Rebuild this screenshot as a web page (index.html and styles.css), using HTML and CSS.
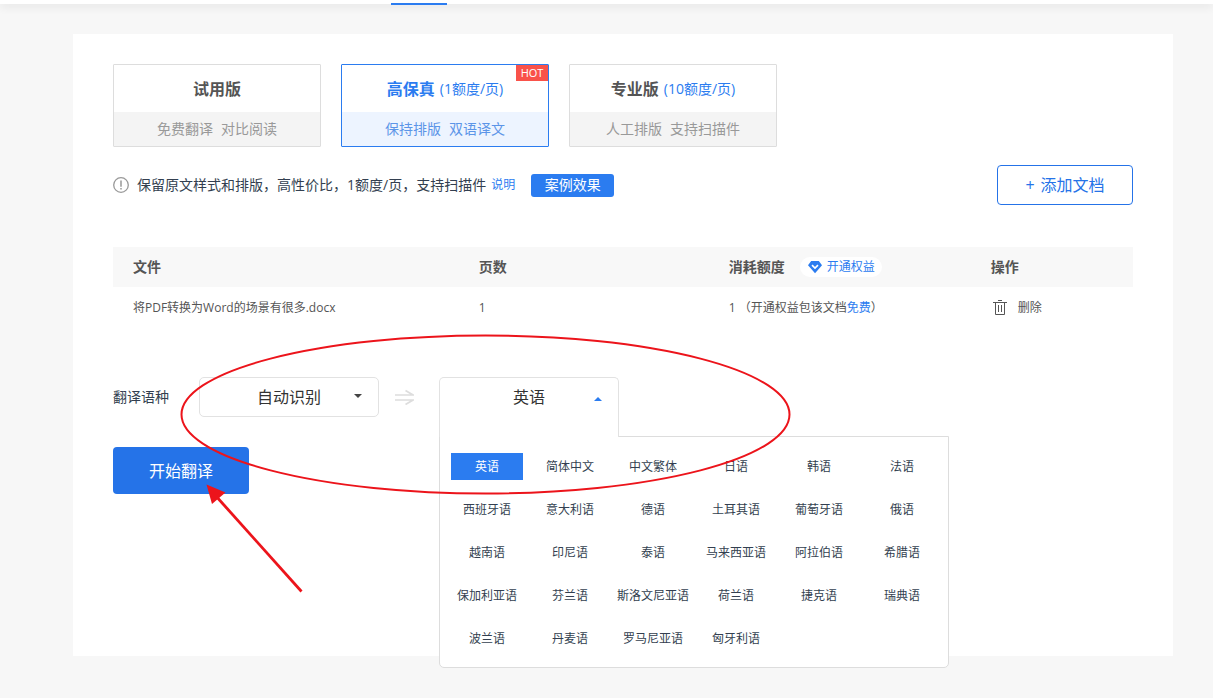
FILE: index.html
```html
<!DOCTYPE html>
<html lang="zh-CN">
<head>
<meta charset="utf-8">
<meta name="viewport" content="width=device-width, initial-scale=1">
<title>文档翻译</title>
<link rel="stylesheet" href="styles.css">
</head>
<body>
<header class="topbar"><span class="topbar-active"></span></header>
<main class="card">
  <div class="plans">
    <button class="plan" type="button">
      <span class="plan-head"><strong>试用版</strong></span>
      <span class="plan-note"><span>免费翻译</span><span>对比阅读</span></span>
    </button>
    <button class="plan plan-active" type="button">
      <span class="plan-head"><strong>高保真</strong><span class="plan-price">(1额度/页)</span></span>
      <span class="plan-note"><span>保持排版</span><span>双语译文</span></span>
      <span class="hot">HOT</span>
    </button>
    <button class="plan" type="button">
      <span class="plan-head"><strong>专业版</strong><span class="plan-price">(10额度/页)</span></span>
      <span class="plan-note"><span>人工排版</span><span>支持扫描件</span></span>
    </button>
  </div>

  <div class="info">
    <svg class="info-icon" width="16" height="16" viewBox="0 0 16 16" fill="none" stroke="#999"><circle cx="8" cy="8" r="7.3" stroke-width="1.3"/><path d="M8 3.5v6.2M8 11v1.6" stroke-width="1.5"/></svg>
    <span class="info-text">保留原文样式和排版，高性价比，1额度/页，支持扫描件</span>
    <a class="info-link" href="#">说明</a>
    <button class="case" type="button">案例效果</button>
    <button class="add" type="button"><span>+</span><span>添加文档</span></button>
  </div>

  <table class="files">
    <colgroup><col class="col-file"><col class="col-pages"><col class="col-cost"><col></colgroup>
    <thead>
      <tr>
        <th>文件</th>
        <th>页数</th>
        <th>
          <div class="cost-head">消耗额度
            <a class="rights" href="#"><svg width="14" height="14" viewBox="0 0 14 14"><path d="M3.2 1h7.6L14 5.2 7 13.2 0 5.2z" fill="#2b7cf0"/><path d="M4 5.1l3 3 3-3" fill="none" stroke="#fff" stroke-width="1.6"/></svg>开通权益</a>
          </div>
        </th>
        <th>操作</th>
      </tr>
    </thead>
    <tbody>
      <tr>
        <td>将PDF转换为Word的场景有很多.docx</td>
        <td>1</td>
        <td>1 （开通权益包该文档<a href="#">免费</a>）</td>
        <td>
          <button class="delete" type="button"><svg width="14" height="16" viewBox="0 0 14 16" fill="none" stroke="#555"><path d="M0 2.5h14M5 .5h4M2.5 2.5v12h9v-12M5.5 5v7M8.5 5v7"/></svg>删除</button>
        </td>
      </tr>
    </tbody>
  </table>

  <div class="languages">
    <label for="source">翻译语种</label>
    <div class="source">
      <select id="source"><option>自动识别</option></select>
      <svg class="caret" width="8" height="4" viewBox="0 0 8 4"><path d="M0 0h8L4 4z" fill="#444"/></svg>
    </div>
    <svg class="direction" width="20" height="16" viewBox="0 0 20 16" fill="none" stroke="#ddd" stroke-width="1.7"><path d="M1 6h18L11.500 1.500M1 11h18L11.500 15.500"/></svg>
    <div class="target">
      <button class="target-button" type="button" aria-expanded="true" aria-controls="target-menu">英语
        <svg class="caret caret-up" width="8" height="4" viewBox="0 0 8 4"><path d="M0 4h8L4 0z" fill="#2b7cf0"/></svg>
      </button>
      <div class="menu" id="target-menu">
        <button class="selected" type="button">英语</button><button type="button">简体中文</button><button type="button">中文繁体</button><button type="button">日语</button><button type="button">韩语</button><button type="button">法语</button>
        <button type="button">西班牙语</button><button type="button">意大利语</button><button type="button">德语</button><button type="button">土耳其语</button><button type="button">葡萄牙语</button><button type="button">俄语</button>
        <button type="button">越南语</button><button type="button">印尼语</button><button type="button">泰语</button><button type="button">马来西亚语</button><button type="button">阿拉伯语</button><button type="button">希腊语</button>
        <button type="button">保加利亚语</button><button type="button">芬兰语</button><button type="button">斯洛文尼亚语</button><button type="button">荷兰语</button><button type="button">捷克语</button><button type="button">瑞典语</button>
        <button type="button">波兰语</button><button type="button">丹麦语</button><button type="button">罗马尼亚语</button><button type="button">匈牙利语</button>
      </div>
    </div>
  </div>

  <button class="start" type="button">开始翻译</button>
</main>
<svg class="annotation" width="800" height="600" viewBox="0 0 800 600" fill="none" stroke="#ec141b">
  <ellipse cx="485.5" cy="414.5" rx="304" ry="79" stroke-width="2"/>
  <path d="M301.5 591.5L215 495" stroke-width="2.8"/>
  <path d="M206.500 484.500L225.500 492.500L212 504z" fill="#ec141b" stroke="none"/>
</svg>
</body>
</html>
```
FILE: styles.css
```css
* { box-sizing: border-box; }

body {
  margin: 0;
  min-height: 100vh;
  background: #f7f7f7;
  color: #555;
  font-family: "Open Sans", "Noto Sans CJK SC", sans-serif;
  font-size: 14px;
  line-height: 20px;
}

button, select { font: inherit; color: inherit; cursor: pointer; }
button { padding: 0; border: 0; background: none; }
a { color: #2b7cf0; text-decoration: none; }
svg { display: block; flex: none; }

.topbar {
  height: 4px;
  padding: 3px 0 0 391px;
  background: #fff;
  box-shadow: 0 2px 10px rgba(0, 0, 0, 0.12);
}
.topbar-active { display: block; width: 56px; height: 2px; background: #2b7cf0; }

.card {
  margin: 30px 40px 42px 73px;
  padding: 30px 40px 162px;
  background: #fff;
}

.plans { display: flex; gap: 20px; }
.plan {
  position: relative;
  width: 208px;
  border: 1px solid #ddd;
  border-radius: 1px;
}
.plan-head {
  display: flex;
  align-items: center;
  justify-content: center;
  gap: 5px;
  height: 47px;
  font-size: 16px;
}
.plan-price { color: #2b7cf0; font-size: 14px; }
.plan-note {
  display: flex;
  align-items: center;
  justify-content: center;
  gap: 8px;
  height: 34px;
  background: #f4f4f4;
  color: #999;
}
.plan-active { border-color: #2b7cf0; color: #2b7cf0; }
.plan-active .plan-note { background: #edf4ff; color: #5c95e8; }
.hot {
  position: absolute;
  top: 0;
  right: 0;
  width: 32px;
  background: #f9524a;
  color: #fff;
  font-size: 11px;
  line-height: 16px;
}

.info {
  display: flex;
  align-items: center;
  margin-top: 18px;
  color: #333f50;
}
.info-icon { margin-right: 8px; }
.info-link { margin: 0 16px 0 5px; font-size: 12px; }
.case {
  width: 83px;
  height: 23px;
  border-radius: 3px;
  background: #2b7cf0;
  color: #fff;
}
.add {
  display: flex;
  align-items: center;
  justify-content: center;
  gap: 6px;
  width: 136px;
  height: 40px;
  margin-left: auto;
  border: 1px solid #2573e8;
  border-radius: 4px;
  color: #2573e8;
  font-size: 16px;
}

.files {
  width: 100%;
  margin-top: 42px;
  border-collapse: collapse;
  table-layout: fixed;
  text-align: left;
}
.col-file { width: 33.9%; }
.col-pages { width: 24.5%; }
.col-cost { width: 25.7%; }
.files th, .files td { height: 40px; padding: 0 0 0 20px; }
.files th { background: #f8f8f8; }
.files td { height: 42px; font-size: 12px; }
.cost-head { display: flex; align-items: center; gap: 15px; }
.rights {
  display: flex;
  align-items: center;
  gap: 5px;
  padding: 0 7px 0 8px;
  border-radius: 10px;
  background: #fff;
  font-size: 12px;
  font-weight: 400;
}
.delete { display: flex; align-items: center; gap: 11px; margin-left: 2px; }

.languages {
  display: flex;
  align-items: flex-start;
  margin-top: 48px;
  color: #333f50;
}
.languages label { width: 86px; line-height: 40px; }
.source, .target { position: relative; width: 180px; height: 40px; }
.source select, .target-button {
  width: 100%;
  height: 40px;
  border: 1px solid #e2e2e2;
  border-radius: 5px;
  background: #fff;
  color: #333;
  font-size: 16px;
}
.source select { appearance: none; padding: 0; text-align: center; text-align-last: center; }
.caret { position: absolute; top: 17px; right: 17px; pointer-events: none; }
.caret-up { top: 19px; right: 16px; }
.direction { margin: 12px 25px 0 15px; }
.target-button {
  position: relative;
  z-index: 2;
  height: 60px;
  padding-bottom: 21px;
  border-bottom: 0;
  border-radius: 5px 5px 0 0;
}
.menu {
  position: absolute;
  z-index: 1;
  top: 59px;
  left: 0;
  display: grid;
  grid-template-columns: repeat(6, 72px);
  gap: 16px 11px;
  padding: 16px 10px 15px 11px;
  border: 1px solid #ddd;
  border-radius: 0 0 5px 5px;
  background: #fff;
}
.menu button { height: 27px; font-size: 12px; white-space: nowrap; }
.menu .selected { background: #2b7cf0; color: #fff; }

.start {
  width: 136px;
  height: 47px;
  margin-top: 30px;
  border-radius: 4px;
  background: #2573e8;
  color: #fff;
  font-size: 16px;
}

.annotation { position: absolute; z-index: 3; top: 0; left: 0; pointer-events: none; }
```
